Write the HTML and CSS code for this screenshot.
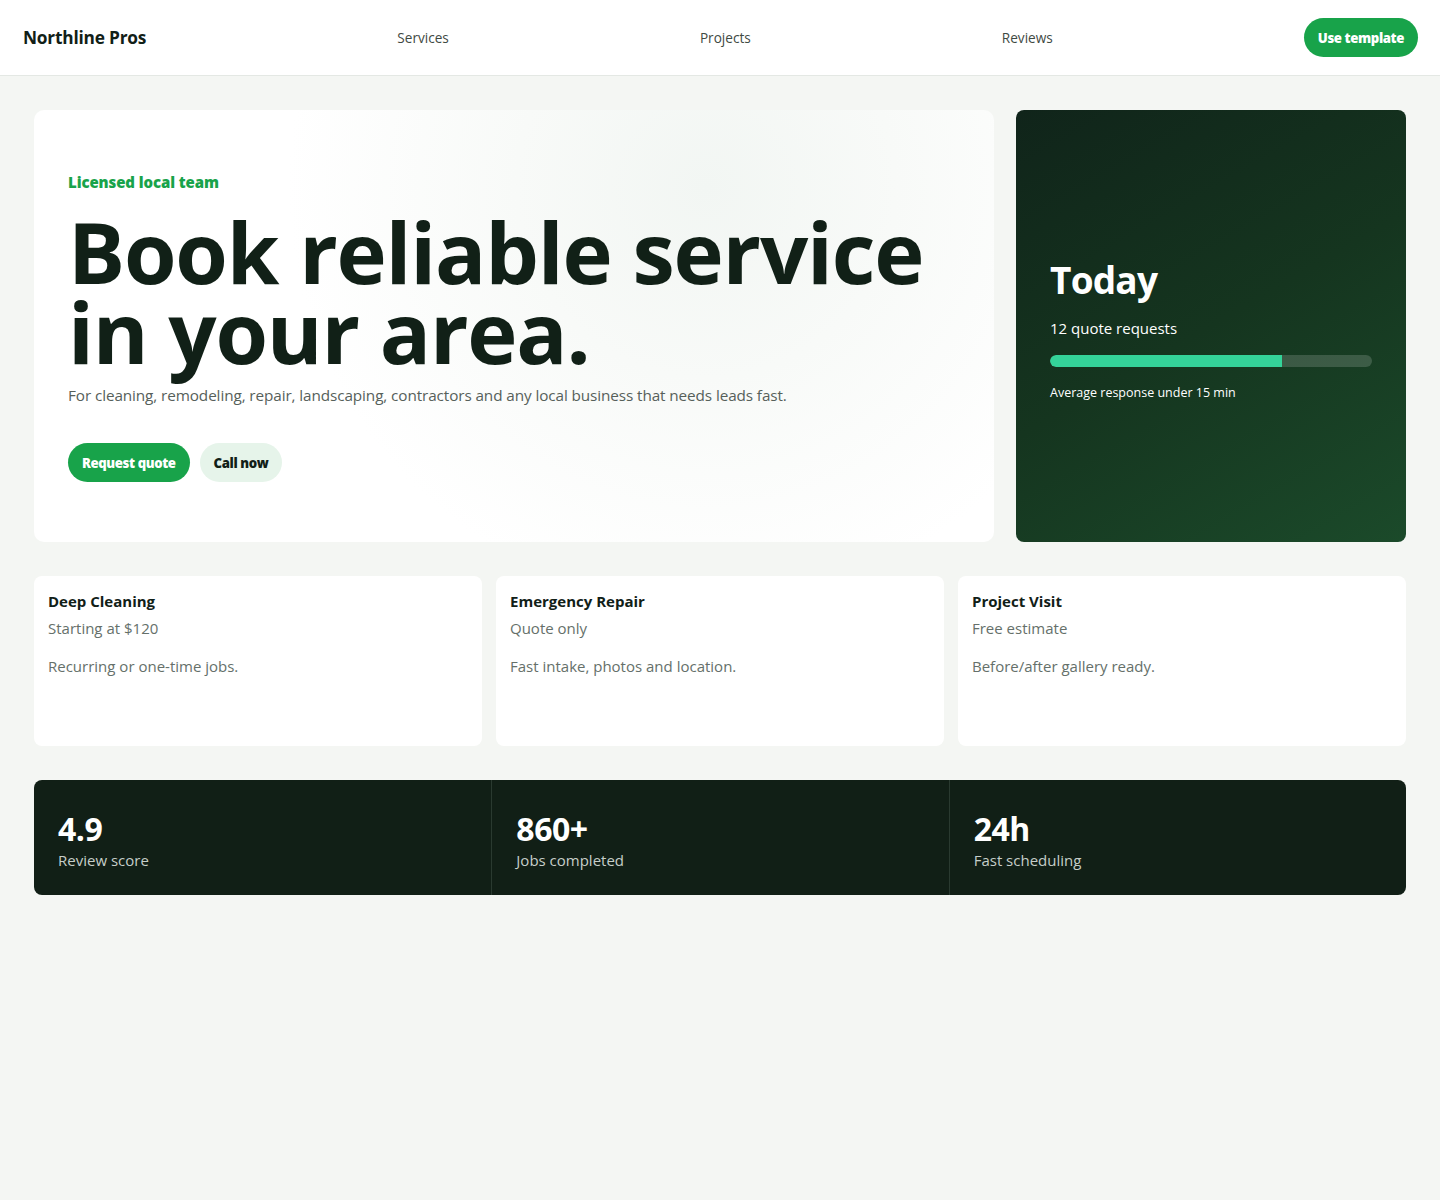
FILE: index.html
```html
<!DOCTYPE html>
<html lang="en">
<head>
<meta charset="utf-8">
<title>Northline Pros</title>
<link rel="stylesheet" href="styles.css">
</head>
<body>
<header class="nav">
  <div class="logo">Northline Pros</div>
  <a class="nav-link" href="#">Services</a>
  <a class="nav-link" href="#">Projects</a>
  <a class="nav-link" href="#">Reviews</a>
  <a class="btn btn-primary nav-btn" href="#">Use template</a>
</header>
<main class="main">
  <section class="hero">
    <div class="hero-card">
      <div class="eyebrow">Licensed local team</div>
      <h1 class="headline">Book reliable service in your area.</h1>
      <p class="lead">For cleaning, remodeling, repair, landscaping, contractors and any local business that needs leads fast.</p>
      <div class="actions">
        <a class="btn btn-primary" href="#">Request quote</a>
        <a class="btn btn-soft" href="#">Call now</a>
      </div>
    </div>
    <aside class="today">
      <div class="today-title">Today</div>
      <div class="today-count">12 quote requests</div>
      <div class="bar"><div class="bar-fill" style="width:72%"></div></div>
      <div class="today-note">Average response under 15 min</div>
    </aside>
  </section>
  <section class="services">
    <div class="card">
      <div class="card-title">Deep Cleaning</div>
      <div class="card-sub">Starting at $120</div>
      <div class="card-desc">Recurring or one-time jobs.</div>
    </div>
    <div class="card">
      <div class="card-title">Emergency Repair</div>
      <div class="card-sub">Quote only</div>
      <div class="card-desc">Fast intake, photos and location.</div>
    </div>
    <div class="card">
      <div class="card-title">Project Visit</div>
      <div class="card-sub">Free estimate</div>
      <div class="card-desc">Before/after gallery ready.</div>
    </div>
  </section>
  <section class="stats">
    <div class="stat">
      <div class="stat-num">4.9</div>
      <div class="stat-label">Review score</div>
    </div>
    <div class="stat">
      <div class="stat-num">860+</div>
      <div class="stat-label">Jobs completed</div>
    </div>
    <div class="stat">
      <div class="stat-num">24h</div>
      <div class="stat-label">Fast scheduling</div>
    </div>
  </section>
</main>
</body>
</html>
```
FILE: styles.css
```css
* { box-sizing: border-box; }
html, body { margin: 0; padding: 0; }
body {
  font-family: "Open Sans", "Noto Sans", sans-serif;
  background: #f4f6f3;
  color: #112017;
}
a { text-decoration: none; color: inherit; }

.nav {
  height: 76px;
  background: #ffffff;
  border-bottom: 1px solid #e4e8e4;
  display: flex;
  align-items: center;
  justify-content: space-between;
  padding: 0 22px 0 23px;
}
.logo {
  font-size: 17.3px;
  font-weight: 700;
  color: #112017;
  letter-spacing: -0.2px;
}
.nav-link {
  font-size: 13.6px;
  color: #3f4a43;
}
.btn {
  display: inline-flex;
  align-items: center;
  justify-content: center;
  height: 39px;
  padding: 0 14px;
  border-radius: 20px;
  font-size: 13.2px;
  font-weight: 800;
  letter-spacing: -0.4px;
}
.btn-primary { background: #18a34a; color: #ffffff; }
.btn-soft { background: #e6f4ea; color: #112017; }

.main {
  padding: 34px 34px 0 34px;
}
.hero {
  display: grid;
  grid-template-columns: 960px 390px;
  gap: 22px;
  height: 432px;
}
.hero-card {
  background: radial-gradient(circle at 70% 18%, #f2f6f3 0%, #f8faf8 25%, #ffffff 55%);
  border-radius: 10px;
  padding: 62px 34px 0 34px;
}
.eyebrow {
  font-size: 15px;
  font-weight: 800;
  color: #18a34a;
  letter-spacing: -0.1px;
}
.headline {
  margin: 19px 0 0 0;
  font-size: 85px;
  line-height: 80px;
  font-weight: 700;
  letter-spacing: -1.2px;
  color: #112017;
}
.lead {
  margin: 14.5px 0 0 0;
  font-size: 15.3px;
  line-height: 18px;
  color: #56605a;
  letter-spacing: -0.1px;
}
.actions {
  display: flex;
  gap: 10px;
  margin-top: 39.5px;
}

.today {
  background: linear-gradient(150deg, #10241a 0%, #15351f 50%, #1b4a2a 100%);
  border-radius: 8px;
  padding: 148px 34px 0 34px;
  display: flex;
  flex-direction: column;
  color: #ffffff;
}
.today-title {
  font-size: 37px;
  font-weight: 700;
  letter-spacing: -0.8px;
  line-height: 1.2;
}
.today-count {
  font-size: 15px;
  margin-top: 16px;
}
.bar {
  margin-top: 17px;
  height: 12px;
  border-radius: 6px;
  background: rgba(255, 255, 255, 0.16);
  overflow: hidden;
}
.bar-fill {
  height: 100%;
  background: #34d399;
  border-radius: 6px 0 0 6px;
}
.today-note {
  font-size: 12.5px;
  margin-top: 17px;
}

.services {
  margin-top: 34px;
  display: grid;
  grid-template-columns: repeat(3, 1fr);
  gap: 14px;
}
.card {
  background: #ffffff;
  border-radius: 8px;
  height: 170px;
  padding: 14px 14px;
}
.card-title {
  font-size: 15px;
  font-weight: 700;
  color: #112017;
  line-height: 22px;
}
.card-sub {
  font-size: 15px;
  color: #65706a;
  margin-top: 5px;
  line-height: 22px;
}
.card-desc {
  font-size: 15px;
  color: #65706a;
  margin-top: 16px;
  line-height: 22px;
}

.stats {
  margin-top: 34px;
  background: #111f16;
  border-radius: 8px;
  display: grid;
  grid-template-columns: repeat(3, 1fr);
  height: 115px;
}
.stat {
  padding: 30px 24px 0 24px;
  border-left: 1px solid #2a3a30;
}
.stat:first-child { border-left: none; }
.stat-num {
  font-size: 32px;
  font-weight: 700;
  color: #ffffff;
  line-height: 38px;
  letter-spacing: -0.5px;
}
.stat-label {
  font-size: 15px;
  color: #c6cec9;
  line-height: 20px;
  margin-top: 2px;
}
```
